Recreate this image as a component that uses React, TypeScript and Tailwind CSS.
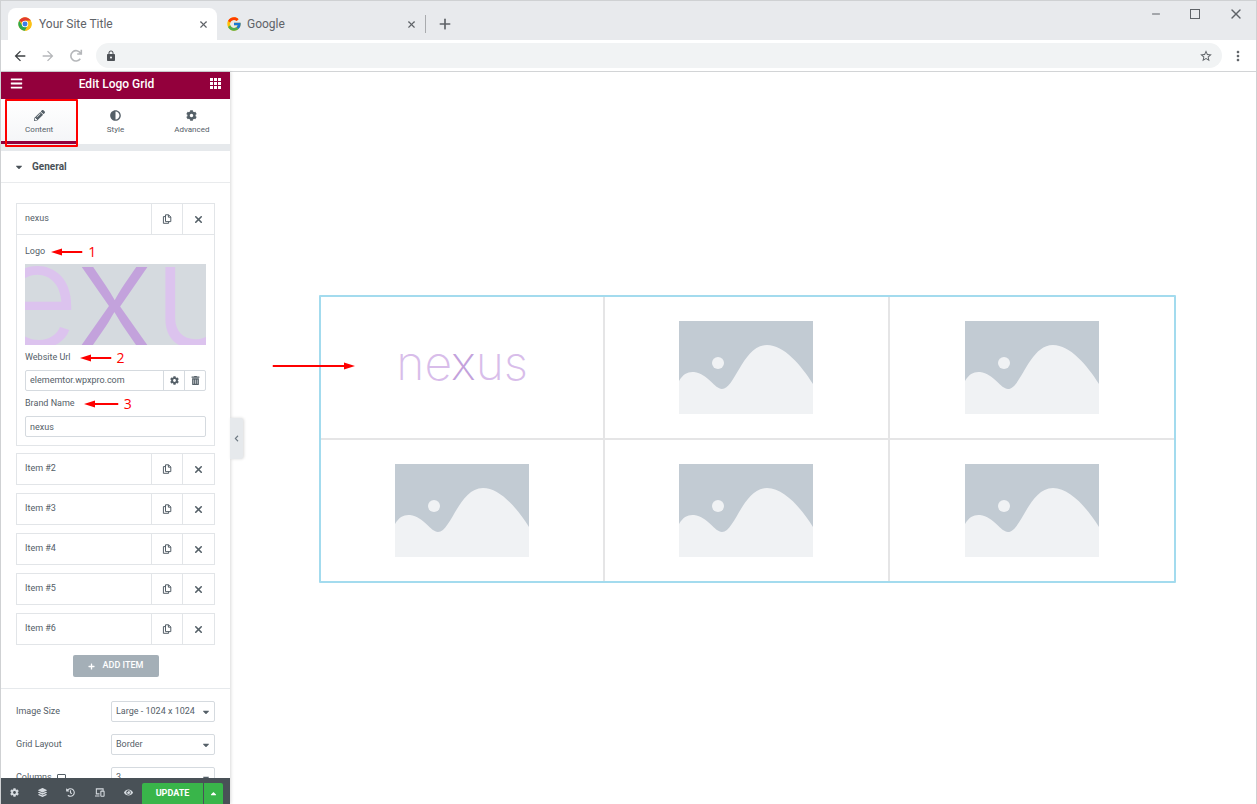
import type { ReactNode } from "react";
import { X, Plus, Minus } from "lucide-react";
import { FcGoogle } from "react-icons/fc";
import {
  FaAdjust,
  FaBars,
  FaCaretDown,
  FaCaretUp,
  FaChevronLeft,
  FaCog,
  FaEye,
  FaHistory,
  FaLayerGroup,
  FaPencilAlt,
  FaPlus,
  FaTrashAlt,
} from "react-icons/fa";
import {
  MdArrowBack,
  MdArrowForward,
  MdLock,
  MdMoreVert,
  MdStarBorder,
} from "react-icons/md";

const items = ["Item #2", "Item #3", "Item #4", "Item #5", "Item #6"];

const ChromeIcon = () => (
  <svg viewBox="0 0 48 48" className="size-[14px]" aria-hidden="true">
    <circle cx="24" cy="24" r="23" fill="#fbc116" />
    <path d="M24 24 4.1 12.5A23 23 0 0 1 43.9 12.5L44 13H24Z" fill="#e33b2e" />
    <path d="M4.1 12.5A23 23 0 0 0 24 47L33.5 29.5 24 24 14.5 29.5Z" fill="#2ca94f" />
    <path d="M43.9 13H24L33.5 29.5 24 47A23 23 0 0 0 43.9 13Z" fill="#fbc116" />
    <circle cx="24" cy="24" r="11" fill="#fff" />
    <circle cx="24" cy="24" r="8.5" fill="#3b7de9" />
  </svg>
);

const ReloadIcon = () => (
  <svg
    viewBox="0 0 16 16"
    className="size-4"
    fill="none"
    stroke="currentColor"
    strokeWidth="1.6"
    aria-hidden="true"
  >
    <path d="M12.3 10.8A5.2 5.2 0 1 1 12.5 5.2M13.3 1.8V6H9.2" />
  </svg>
);

const GridIcon = () => (
  <svg viewBox="0 0 11 11" className="size-[11px]" fill="currentColor" aria-hidden="true">
    {[0, 4, 8].map((y) =>
      [0, 4, 8].map((x) => <rect key={`${x}-${y}`} x={x} y={y} width="3" height="3" />)
    )}
  </svg>
);

const CopyIcon = () => (
  <svg
    viewBox="0 0 10 10"
    className="size-[10px]"
    fill="none"
    stroke="currentColor"
    strokeLinejoin="round"
    aria-hidden="true"
  >
    <path d="M3.5 .8H6.6L8.8 3V7.6H3.5ZM6.4 .8V3.2H8.8M3.5 2.6H1.4V9.3H6.6V7.6" />
  </svg>
);

const DevicesIcon = () => (
  <svg
    viewBox="0 0 12 10"
    className="h-[9px] w-[11px]"
    fill="none"
    stroke="currentColor"
    strokeWidth="1.2"
    aria-hidden="true"
  >
    <path d="M6 6.5H2.5V1H10V3M1 8.8H6" />
    <rect x="7.5" y="3.5" width="3.6" height="5.6" rx=".5" />
  </svg>
);

const Arrow = ({ length, right }: { length: number; right?: boolean }) => (
  <svg
    width={length}
    height="8"
    viewBox={`0 0 ${length} 8`}
    fill="#fe0000"
    className={right ? "rotate-180" : ""}
    aria-hidden="true"
  >
    <path d={`M0 4 11 .4V3H${length - 1}Q${length} 4 ${length - 1} 5H11V7.6Z`} />
  </svg>
);

const Placeholder = () => (
  <svg
    viewBox="0 0 134 93"
    className="h-[93px] w-[134px]"
    role="img"
    aria-label="Placeholder image"
  >
    <path fill="#c2cbd3" d="M0 0H134V93H0Z" />
    <path
      fill="#f0f2f4"
      d="M0 60C4 53 9 50.5 15 51C29 53 36 68 43 68C56 68 64 24 88 24C105 24 122 44 134 63V93H0Z"
    />
    <circle cx="39" cy="42" r="6" fill="#f0f2f4" />
  </svg>
);

const Wordmark = () => (
  <>
    ne<span className="text-[#c3a2dc]">x</span>us
  </>
);

const Step = ({ n, length }: { n: number; length: number }) => (
  <span className="flex items-center gap-[5px] font-['Open_Sans',sans-serif] text-[14px] leading-[14px] text-[#fe0000]">
    <Arrow length={length} />
    {n}
  </span>
);

const RowHead = ({ title }: { title: string }) => (
  <div className="flex h-[30px] divide-x divide-[#e2e5e8]">
    <button className="flex-1 px-2 text-left">{title}</button>
    <button aria-label={`Duplicate ${title}`} className="flex w-[31px] items-center justify-center">
      <CopyIcon />
    </button>
    <button aria-label={`Remove ${title}`} className="flex w-[31px] items-center justify-center">
      <X className="size-[11px]" strokeWidth={3.5} />
    </button>
  </div>
);

const PanelTab = ({ icon, label, active }: { icon: ReactNode; label: string; active?: boolean }) => (
  <button
    className={`flex flex-1 flex-col items-center gap-1 pt-[11px] text-[8px] leading-[9px] ${
      active ? "border-b-3 border-[#93003c] bg-gradient-to-b from-white to-[#f5f6f8]" : ""
    }`}
  >
    <span className="text-[11px]">{icon}</span>
    {label}
  </button>
);

const SelectRow = ({ id, label, options }: { id: string; label: ReactNode; options: string[] }) => (
  <div className="flex h-[21px] items-center justify-between">
    <label htmlFor={id} className="flex items-center gap-1">
      {label}
    </label>
    <div className="relative w-[104px]">
      <select
        id={id}
        className="h-[21px] w-full appearance-none rounded-[2px] border border-[#d5dadf] bg-white px-1 text-[9px]"
      >
        {options.map((option) => (
          <option key={option}>{option}</option>
        ))}
      </select>
      <FaCaretDown className="pointer-events-none absolute top-[6px] right-1 size-[10px]" />
    </div>
  </div>
);

const BrowserBar = () => (
  <header className="shrink-0 border-b border-[#d2d4d6] bg-white text-[#5f6368]">
    <div className="flex h-[39px] items-end bg-[#e8eaed] pl-[7px] text-[12px]">
      <div className="flex h-8 w-[209px] items-center gap-[7px] rounded-t-lg bg-white pr-2 pl-[10px]">
        <ChromeIcon />
        <span className="flex-1">Your Site Title</span>
        <button aria-label="Close tab">
          <X className="size-[11px]" strokeWidth={2.5} />
        </button>
      </div>
      <div className="flex h-8 w-[208px] items-center gap-[5px] pr-2 pl-[9px]">
        <FcGoogle className="size-4" />
        <span className="flex-1">Google</span>
        <button aria-label="Close tab">
          <X className="size-[11px]" strokeWidth={2.5} />
        </button>
      </div>
      <div className="mb-[7px] h-[18px] w-px bg-[#a9abae]" />
      <button aria-label="New tab" className="mb-2 ml-[11px]">
        <Plus className="size-4" strokeWidth={2.5} />
      </button>
      <div className="mb-[18px] ml-auto flex items-center gap-7 pr-3">
        <button aria-label="Minimize">
          <Minus className="size-3" />
        </button>
        <button aria-label="Maximize" className="size-[10px] border border-current" />
        <button aria-label="Close window">
          <X className="size-4" />
        </button>
      </div>
    </div>
    <div className="flex h-[31px] items-center gap-3 pr-[10px] pl-[11px] text-[16px]">
      <button aria-label="Back">
        <MdArrowBack className="text-[#3c4043]" />
      </button>
      <button aria-label="Forward">
        <MdArrowForward className="text-[#b5b7ba]" />
      </button>
      <button aria-label="Reload" className="text-[#b5b7ba]">
        <ReloadIcon />
      </button>
      <div className="flex h-[25px] flex-1 items-center rounded-full bg-[#f1f3f4] px-[9px]">
        <MdLock className="size-3 text-[#4d5156]" />
        <input aria-label="Address" className="h-full flex-1 px-2 text-[12px] outline-none" />
        <button aria-label="Bookmark">
          <MdStarBorder className="text-[14px]" />
        </button>
      </div>
      <button aria-label="Menu" className="-ml-1">
        <MdMoreVert />
      </button>
    </div>
  </header>
);

const Panel = () => (
  <aside className="flex w-[229px] shrink-0 flex-col bg-white text-[9px] text-[#556068] shadow-[1px_0_3px_rgba(0,0,0,0.15)]">
    <div className="flex h-[27px] shrink-0 items-center justify-between bg-[#93003c] px-[9px] pb-1 text-white">
      <button aria-label="Menu">
        <FaBars className="size-[13px]" />
      </button>
      <h1 className="text-[12px] font-medium">Edit Logo Grid</h1>
      <button aria-label="Widgets">
        <GridIcon />
      </button>
    </div>

    <nav className="relative flex h-[45px] shrink-0">
      <PanelTab icon={<FaPencilAlt />} label="Content" active />
      <PanelTab icon={<FaAdjust />} label="Style" />
      <PanelTab icon={<FaCog />} label="Advanced" />
      <div className="pointer-events-none absolute top-0 left-1 h-12 w-[73px] rounded-[1px] border-2 border-[#fe0000]" />
    </nav>
    <div className="h-[7px] shrink-0 bg-[#e6e9ec]" />

    <div className="flex-1 overflow-hidden">
      <button className="flex h-8 w-full items-center gap-2 border-b border-[#e9ebed] px-[13px] text-[10px] font-bold text-[#495157]">
        <FaCaretDown className="size-[10px]" />
        General
      </button>

      <div className="flex flex-col gap-[7px] px-[15px] pt-5">
        <div className="border border-[#e2e5e8]">
          <RowHead title="nexus" />
          <div className="border-t border-[#e2e5e8] px-2 pt-[10px] pb-2">
            <div className="flex h-[13px] items-center gap-[6px]">
              <span>Logo</span>
              <Step n={1} length={32} />
            </div>
            <div className="mt-[6px] flex h-[81px] items-center justify-center overflow-hidden bg-[#d5dadf] pr-2 font-['Inter',sans-serif] text-[146px] leading-none font-light text-[#dcc3ee]">
              <span className="pb-[22px]">
                <Wordmark />
              </span>
            </div>
            <div className="mt-[6px] flex h-[13px] items-center gap-[9px]">
              <label htmlFor="url">Website Url</label>
              <Step n={2} length={32} />
            </div>
            <div className="mt-[6px] flex h-[21px] divide-x divide-[#d5dadf] rounded-[2px] border border-[#d5dadf]">
              <input
                id="url"
                defaultValue="elememtor.wpxpro.com"
                className="min-w-0 flex-1 px-1 outline-none"
              />
              <button aria-label="Link options" className="flex w-[21px] items-center justify-center">
                <FaCog className="size-[9px]" />
              </button>
              <button aria-label="Clear link" className="flex w-5 items-center justify-center">
                <FaTrashAlt className="size-[9px]" />
              </button>
            </div>
            <div className="mt-[6px] flex h-[13px] items-center gap-[9px]">
              <label htmlFor="brand">Brand Name</label>
              <Step n={3} length={35} />
            </div>
            <input
              id="brand"
              defaultValue="nexus"
              className="mt-[6px] block h-[21px] w-full rounded-[2px] border border-[#d5dadf] px-1 outline-none"
            />
          </div>
        </div>
        <div className="flex flex-col gap-2">
          {items.map((item) => (
            <div key={item} className="border border-[#e2e5e8]">
              <RowHead title={item} />
            </div>
          ))}
        </div>
      </div>

      <div className="flex justify-center border-b border-[#e6e9ec] pt-[10px] pb-[11px]">
        <button className="flex h-[22px] w-[86px] items-center justify-center gap-2 rounded-[2px] bg-[#a4afb7] text-[9px] font-medium text-white">
          <FaPlus className="size-[7px]" />
          ADD ITEM
        </button>
      </div>

      <div className="flex flex-col gap-3 px-[15px] pt-3">
        <SelectRow id="size" label="Image Size" options={["Large - 1024 x 1024"]} />
        <SelectRow id="layout" label="Grid Layout" options={["Border"]} />
        <SelectRow
          id="columns"
          label={
            <>
              Columns
              <span className="ml-px h-[7px] w-[9px] rounded-[1px] border border-current" />
            </>
          }
          options={["3"]}
        />
      </div>
    </div>

    <footer className="flex h-[26px] shrink-0 items-end bg-[#495157] pr-[7px] text-[9px] text-[#d5dadf]">
      <div className="flex h-[21px] flex-1 items-center justify-between px-[9px] pb-[2px]">
        <button aria-label="Settings">
          <FaCog />
        </button>
        <button aria-label="Navigator">
          <FaLayerGroup />
        </button>
        <button aria-label="History">
          <FaHistory />
        </button>
        <button aria-label="Responsive mode">
          <DevicesIcon />
        </button>
        <button aria-label="Preview">
          <FaEye />
        </button>
      </div>
      <button className="h-[21px] w-[61px] rounded-tl-[2px] bg-[#39b54a] font-bold text-white">UPDATE</button>
      <button
        aria-label="Save options"
        className="ml-px flex h-[21px] w-[19px] items-center justify-center rounded-tr-[2px] bg-[#39b54a] text-white"
      >
        <FaCaretUp />
      </button>
    </footer>
  </aside>
);

const Preview = () => (
  <main className="flex min-w-0 flex-1 items-center pt-px">
    <button
      aria-label="Collapse panel"
      className="flex h-[41px] w-[13px] items-center justify-center rounded-r-[3px] bg-[#e6e9ec] pr-px text-[#6d7882] shadow-[1px_0_3px_rgba(0,0,0,0.15)]"
    >
      <FaChevronLeft className="size-[7px]" />
    </button>
    <section className="mr-20 ml-[76px] grid flex-1 grid-cols-3 rounded-[1px] border-2 border-[#a3dbee]">
      {[0, 1, 2, 3, 4, 5].map((cell) => (
        <div
          key={cell}
          className={`relative flex items-center justify-center border-[#e5e5e6] py-6 ${
            cell % 3 < 2 ? "border-r-2" : ""
          } ${cell < 3 ? "border-b-2" : ""}`}
        >
          {cell === 0 ? (
            <>
              <div className="absolute top-[65px] -left-[49px]">
                <Arrow length={83} right />
              </div>
              <span className="pb-2 font-['Inter',sans-serif] text-[48px] leading-none font-extralight text-[#d8bdea]">
                <Wordmark />
              </span>
            </>
          ) : (
            <Placeholder />
          )}
        </div>
      ))}
    </section>
  </main>
);

export default function App() {
  return (
    <div className="flex h-screen flex-col overflow-hidden border border-b-0 border-[#cfd1d3] bg-white font-['Roboto',sans-serif]">
      <BrowserBar />
      <div className="flex min-h-0 flex-1">
        <Panel />
        <Preview />
      </div>
    </div>
  );
}
